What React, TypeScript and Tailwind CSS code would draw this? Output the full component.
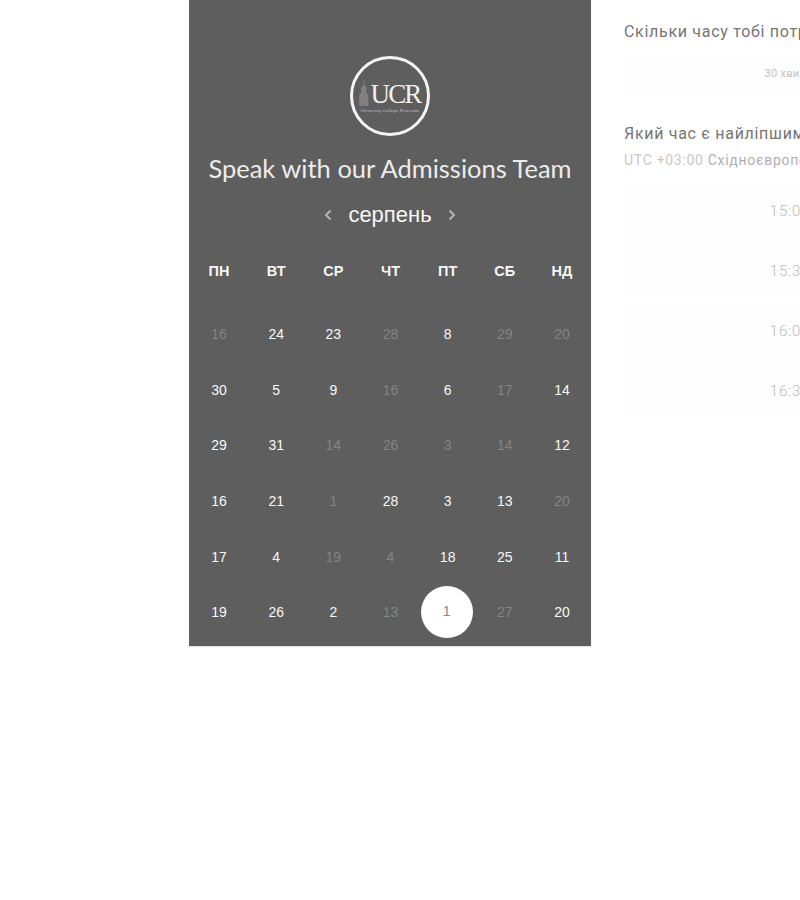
const weeks: [string, boolean][][] = [
  [["16", false], ["24", true], ["23", true], ["28", false], ["8", true], ["29", false], ["20", false]],
  [["30", true], ["5", true], ["9", true], ["16", false], ["6", true], ["17", false], ["14", true]],
  [["29", true], ["31", true], ["14", false], ["26", false], ["3", false], ["14", false], ["12", true]],
  [["16", true], ["21", true], ["1", false], ["28", true], ["3", true], ["13", true], ["20", false]],
  [["17", true], ["4", true], ["19", false], ["4", false], ["18", true], ["25", true], ["11", true]],
  [["19", true], ["26", true], ["2", true], ["13", false], ["1", true], ["27", false], ["20", true]],
];
const days = ["ПН", "ВТ", "СР", "ЧТ", "ПТ", "СБ", "НД"];
const times = ["15:00", "15:30", "16:00", "16:30"];

function Logo() {
  return (
    <div className="flex h-[80px] w-[80px] flex-col items-center justify-center rounded-full border-[3px] border-[#f4f4f4]">
      <div className="flex items-end">
        <svg width="10" height="26" viewBox="0 0 10 27" className="mb-[2px] mr-[1px]" fill="#808080">
          <path d="M4.5 0h1v5l2 3v5l2 2v12H0V15l2-2V8l2.500-3z" />
        </svg>
        <span className="font-['Liberation_Serif',serif] text-[27px] leading-[27px] tracking-[-1.800px] text-[#f0f0f0]">UCR</span>
      </div>
      <span className="font-['Liberation_Sans',sans-serif] text-[4px] leading-[5px] tracking-[0.3px] whitespace-nowrap text-[#c4c4c4]">University College Riverside</span>
    </div>
  );
}

export default function App() {
  return (
    <div className="flex h-[900px] w-[800px] items-start overflow-hidden bg-white pl-[189px]">
      <div className="flex h-[646px] w-[402px] shrink-0 flex-col items-center bg-[#5e5e5e] pt-[56px] shadow-[0_1px_1px_#e4e4e4]">
        <Logo />
        <h1 className="mt-[15px] font-['Lato',sans-serif] text-[25.500px] leading-[34px] font-normal whitespace-nowrap text-[#ececec]">
          Speak with our Admissions Team
        </h1>
        <div className="mt-[17px] flex h-[26px] items-center font-['Liberation_Sans',sans-serif]">
          <svg width="8" height="12" viewBox="0 0 8 12" fill="none" stroke="#b4b4b4" strokeWidth="2"><path d="M6.500 1.500 2 6l4.500 4.500" /></svg>
          <span className="mx-[16px] text-[22px] leading-[26px] text-[#f6f6f6]">серпень</span>
          <svg width="8" height="12" viewBox="0 0 8 12" fill="none" stroke="#b4b4b4" strokeWidth="2"><path d="M1.500 1.500 6 6l-4.500 4.500" /></svg>
        </div>
        <div className="mt-[35px] ml-[1px] grid w-[400px] grid-cols-7 font-['Liberation_Sans',sans-serif] text-[14.500px] leading-[16px] font-bold text-[#f6f6f6]">
          {days.map((d) => (
            <div key={d} className="text-center">{d}</div>
          ))}
        </div>
        <div className="mt-[28px] ml-[1px] grid w-[400px] grid-cols-7 grid-rows-[repeat(6,55.600px)] font-['Liberation_Sans',sans-serif] text-[14px]">
          {weeks.flatMap((week, w) =>
            week.map(([n, on], i) => {
              const selected = w === 5 && i === 4;
              return (
                <div key={`${w}-${i}`} className="flex items-center justify-center">
                  {selected ? (
                    <div className="mr-[2px] mb-[2px] flex h-[52px] w-[52px] items-center justify-center rounded-full bg-white font-light text-[#8a8a8a]">{n}</div>
                  ) : (
                    <span className={on ? "text-[#f8f8f8]" : "text-[#848484]"}>{n}</span>
                  )}
                </div>
              );
            })
          )}
        </div>
      </div>
      <div className="ml-[33px] w-[332px] shrink-0 pt-[22px] font-['Roboto',sans-serif]">
        <p className="text-[16px] leading-[20px] tracking-[0.7px] whitespace-nowrap text-[#757575]">Скільки часу тобі потрібно?</p>
        <div className="mt-[15px] flex h-[35px] items-center justify-center bg-[#fdfdfd] pl-[4px] text-[11px] tracking-[0.3px] text-[#c4c4c4]">30 хвилин</div>
        <p className="mt-[32px] text-[16px] leading-[20px] tracking-[0.7px] whitespace-nowrap text-[#757575]">Який час є найліпшим?</p>
        <p className="mt-[7px] text-[14px] leading-[18px] tracking-[0.7px] whitespace-nowrap text-[#c8c8c8]">
          UTC +03:00 <span className="text-[#b0b0b0]">Східноєвропейський час</span>
        </p>
        <div className="mt-[14px] flex flex-col gap-[4px]">
          {times.map((t) => (
            <div key={t} className="flex h-[56px] items-center justify-center bg-[#fefefe] text-[15px] font-light tracking-[0.8px] text-[#bcbcbc]">{t}</div>
          ))}
        </div>
      </div>
    </div>
  );
}
